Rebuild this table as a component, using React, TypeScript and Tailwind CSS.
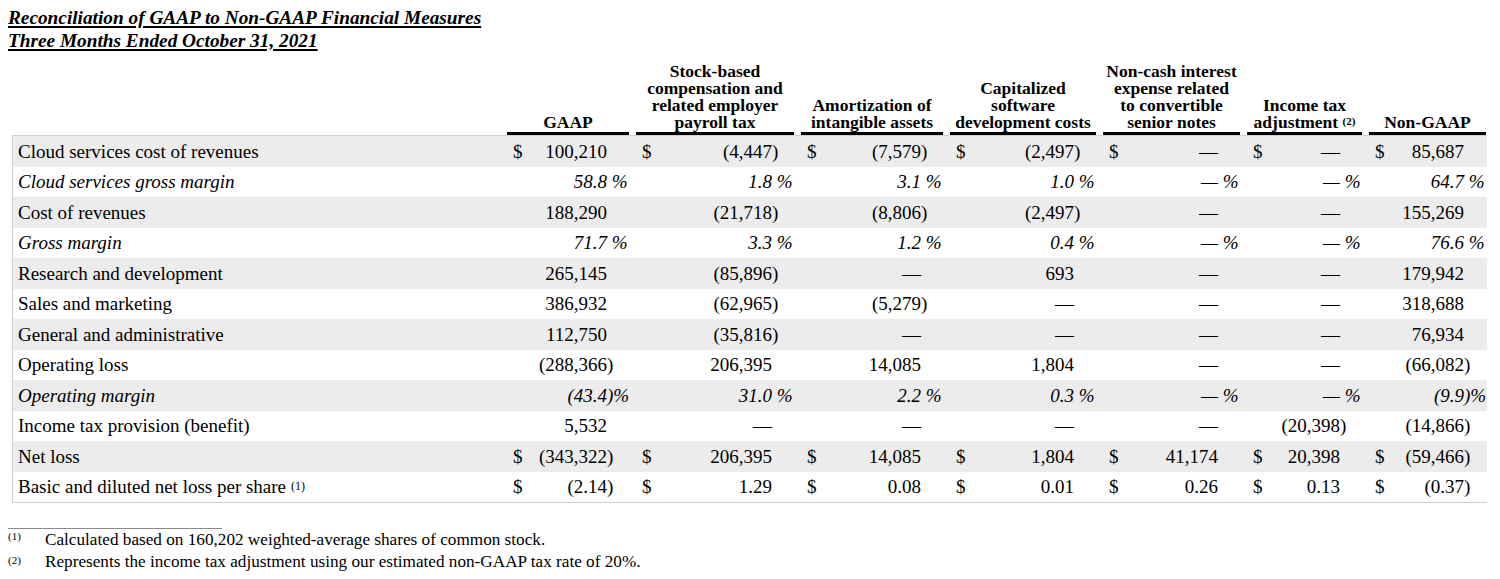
import React from "react";

type Cell = { d?: boolean; v: string; s?: string };

interface Row {
  label: string;
  italic?: boolean;
  sup?: string;
  cells: Cell[];
}

// parse "(4,447)" -> value "(4,447" + suffix ")" ; "58.8 %" -> "58.8" + " %"
const c = (raw: string, d = false): Cell => {
  if (raw.endsWith(")%")) return { d, v: raw.slice(0, -2), s: ")%" };
  if (raw.endsWith(" %")) return { d, v: raw.slice(0, -2), s: " %" };
  if (raw.endsWith(")")) return { d, v: raw.slice(0, -1), s: ")" };
  return { d, v: raw };
};

const line = (vals: string[], d = false) => vals.map((v) => c(v, d));

const rows: Row[] = [
  {
    label: "Cloud services cost of revenues",
    cells: line(["100,210", "(4,447)", "(7,579)", "(2,497)", "—", "—", "85,687"], true),
  },
  {
    label: "Cloud services gross margin",
    italic: true,
    cells: line(["58.8 %", "1.8 %", "3.1 %", "1.0 %", "— %", "— %", "64.7 %"]),
  },
  {
    label: "Cost of revenues",
    cells: line(["188,290", "(21,718)", "(8,806)", "(2,497)", "—", "—", "155,269"]),
  },
  {
    label: "Gross margin",
    italic: true,
    cells: line(["71.7 %", "3.3 %", "1.2 %", "0.4 %", "— %", "— %", "76.6 %"]),
  },
  {
    label: "Research and development",
    cells: line(["265,145", "(85,896)", "—", "693", "—", "—", "179,942"]),
  },
  {
    label: "Sales and marketing",
    cells: line(["386,932", "(62,965)", "(5,279)", "—", "—", "—", "318,688"]),
  },
  {
    label: "General and administrative",
    cells: line(["112,750", "(35,816)", "—", "—", "—", "—", "76,934"]),
  },
  {
    label: "Operating loss",
    cells: line(["(288,366)", "206,395", "14,085", "1,804", "—", "—", "(66,082)"]),
  },
  {
    label: "Operating margin",
    italic: true,
    cells: line(["(43.4)%", "31.0 %", "2.2 %", "0.3 %", "— %", "— %", "(9.9)%"]),
  },
  {
    label: "Income tax provision (benefit)",
    cells: line(["5,532", "—", "—", "—", "—", "(20,398)", "(14,866)"]),
  },
  {
    label: "Net loss",
    cells: line(["(343,322)", "206,395", "14,085", "1,804", "41,174", "20,398", "(59,466)"], true),
  },
  {
    label: "Basic and diluted net loss per share",
    sup: "(1)",
    cells: line(["(2.14)", "1.29", "0.08", "0.01", "0.26", "0.13", "(0.37)"], true),
  },
];

const headers: React.ReactNode[] = [
  <>GAAP</>,
  <>
    Stock-based
    <br />
    compensation and
    <br />
    related employer
    <br />
    payroll tax
  </>,
  <>
    Amortization of
    <br />
    intangible assets
  </>,
  <>
    Capitalized
    <br />
    software
    <br />
    development costs
  </>,
  <>
    Non-cash interest
    <br />
    expense related
    <br />
    to convertible
    <br />
    senior notes
  </>,
  <>
    Income tax
    <br />
    adjustment <sup className="text-[11px] relative -top-[3px]">(2)</sup>
  </>,
  <>Non-GAAP</>,
];

const grid =
  "grid grid-cols-[488px_122px_158px_142px_146px_137px_115px_117px] gap-x-[7px]";

const DataCell: React.FC<{ cell: Cell }> = ({ cell }) => (
  <div className="flex items-center">
    <span className="w-[18px] pl-[5px]">{cell.d ? "$" : ""}</span>
    <span className="flex-1 text-right whitespace-pre">{cell.v}</span>
    <span className="w-[23px] text-left whitespace-pre">{cell.s ?? ""}</span>
  </div>
);

export default function App() {
  return (
    <div
      className="w-[1500px] h-[579px] bg-white text-black overflow-hidden"
      style={{ fontFamily: '"Liberation Serif", "Times New Roman", serif' }}
    >
      {/* Title */}
      <div className="pt-[6px] pl-[8px] text-[19.3px] leading-[23px] font-bold italic underline decoration-2 underline-offset-2">
        <div>Reconciliation of GAAP to Non-GAAP Financial Measures</div>
        <div>Three Months Ended October 31, 2021</div>
      </div>

      <div className="ml-[12px] w-[1475px]">
        {/* Column headers */}
        <div className={`${grid} h-[83px] items-end`}>
          <div />
          {headers.map((h, i) => (
            <div
              key={i}
              className="text-center font-bold text-[17.5px] leading-[17px] border-b-[3px] border-black pb-[1px]"
            >
              {h}
            </div>
          ))}
        </div>

        {/* Body */}
        <div className="border-t border-l border-b border-[#cfcfcf]">
          {rows.map((row, i) => (
            <div
              key={i}
              className={`${grid} h-[30.5px] items-center text-[19px] leading-none ${
                i % 2 === 0 ? "bg-[#ececec]" : "bg-white"
              } ${row.italic ? "italic" : ""}`}
            >
              <div className="pl-[5px] whitespace-nowrap">
                {row.label}
                {row.sup && (
                  <sup className="text-[12px] relative -top-[3px] ml-[5px]">{row.sup}</sup>
                )}
              </div>
              {row.cells.map((cell, j) => (
                <DataCell key={j} cell={cell} />
              ))}
            </div>
          ))}
        </div>
      </div>

      {/* Footnotes */}
      <div className="mt-[25px] ml-[8px] w-[214px] border-t border-[#8a8a8a]" />
      <div className="pl-[8px] text-[17.2px] leading-[22px]">
        <div className="flex">
          <span className="w-[37px] text-[11px] leading-[14px]">(1)</span>
          <span>Calculated based on 160,202 weighted-average shares of common stock.</span>
        </div>
        <div className="flex">
          <span className="w-[37px] text-[11px] leading-[18px]">(2)</span>
          <span>Represents the income tax adjustment using our estimated non-GAAP tax rate of 20%.</span>
        </div>
      </div>
    </div>
  );
}
